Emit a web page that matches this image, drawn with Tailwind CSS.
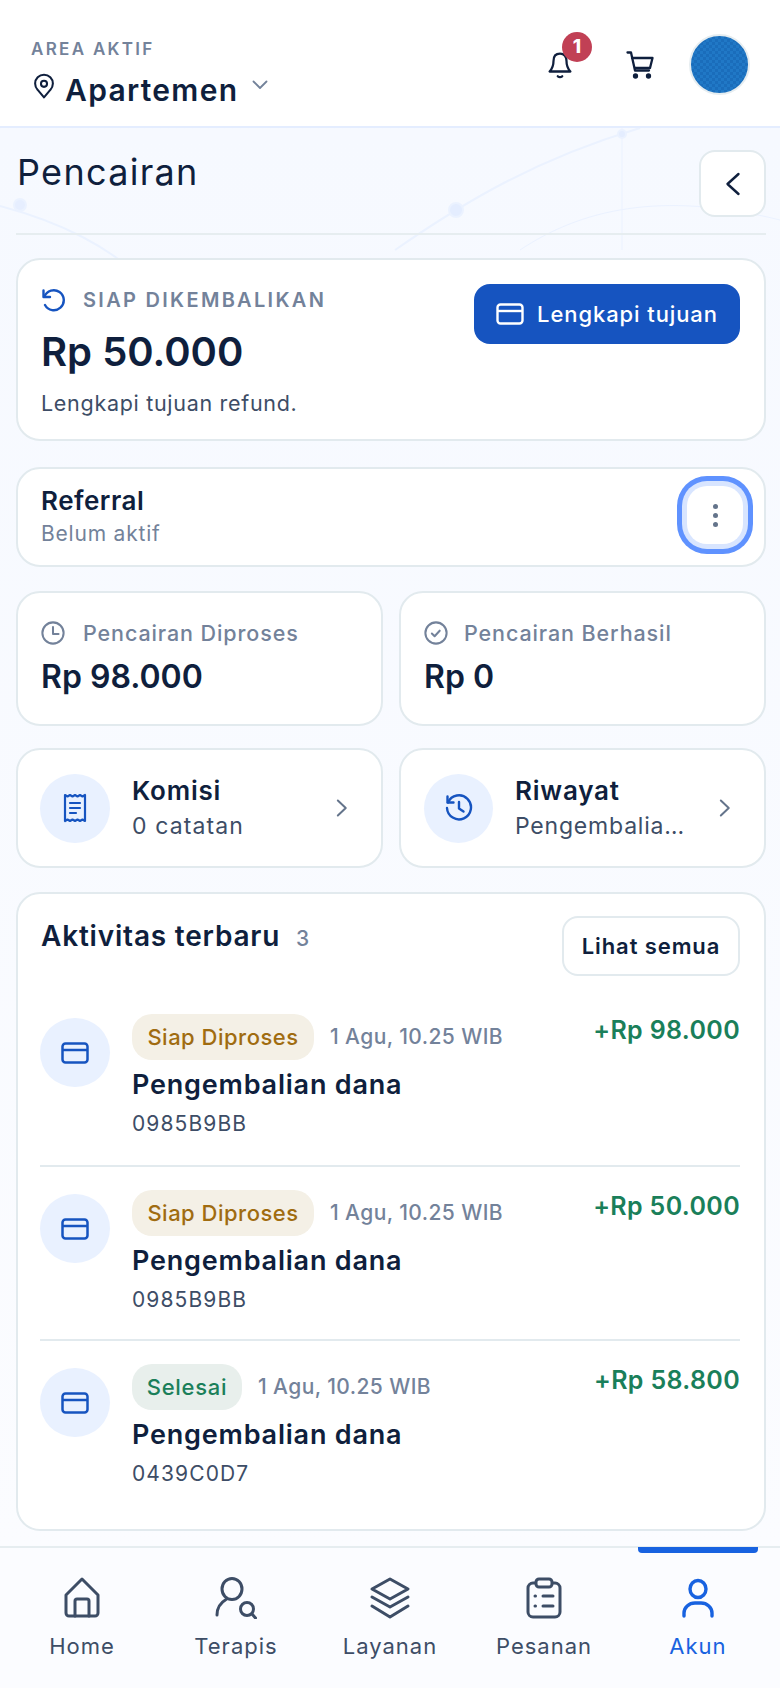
<!DOCTYPE html>
<html lang="id">
<head>
  <meta charset="UTF-8" />
  <meta name="viewport" content="width=device-width, initial-scale=1.0" />
  <title>Pencairan</title>
  <script src="https://cdn.jsdelivr.net/npm/@tailwindcss/browser@4"></script>
</head>
<body class="font-[Inter,sans-serif] text-[#0f1f3d] bg-[#f7faff]">
  <div class="w-[780px] h-[1688px] flex flex-col overflow-hidden">

    <!-- header -->
    <header class="h-[128px] shrink-0 bg-white border-b-2 border-[#e4edff] flex justify-between pl-[31px] pr-[30px] relative z-10">
      <div class="pt-[39px]">
        <p class="text-[17px] leading-[20px] font-semibold tracking-[2.300px] text-[#73829a]">AREA AKTIF</p>
        <div class="flex items-center mt-[12px]">
          <svg class="w-[26px] h-[28px] mt-[-8px]" viewBox="0 0 24 24" fill="none" stroke="#0f1f3d" stroke-width="1.9" stroke-linecap="round" stroke-linejoin="round"><circle cx="12" cy="10" r="2.8"/><path d="M12 22.5 6.2 15.6A8.2 8.2 0 1 1 17.8 15.6z"/></svg>
          <span class="ml-[8px] text-[30px] leading-[38px] font-semibold tracking-[1.300px]">Apartemen</span>
          <svg class="w-[18px] h-[18px] ml-[13px] mt-[-10px]" viewBox="0 0 18 18" fill="none" stroke="#73829a" stroke-width="1.8" stroke-linecap="round" stroke-linejoin="round"><path d="m2.500 5.500 6.500 6.500 6.500-6.500"/></svg>
        </div>
      </div>
      <div class="flex items-start">
        <div class="relative mt-[51px]">
          <svg class="w-[26px] h-[28px]" viewBox="0 0 30 32" fill="none" stroke="#0f1f3d" stroke-width="2.600" stroke-linecap="round" stroke-linejoin="round"><path d="M15 3c-5 0-7.500 3.500-7.500 8.500 0 6-1.500 9-4.500 12h24c-3-3-4.500-6-4.500-12C22.500 6.500 20 3 15 3z"/><path d="M12.500 29c1.500 1.200 3.500 1.200 5 0"/></svg>
          <span class="absolute left-[15px] top-[-19px] w-[30px] h-[30px] rounded-full bg-[#c14055] text-white text-[19px] font-extrabold flex items-center justify-center">1</span>
        </div>
        <svg class="w-[28px] h-[28px] ml-[53px] mt-[51px]" viewBox="0 0 28 28" fill="none" stroke="#0f1f3d" stroke-width="2.300" stroke-linecap="round" stroke-linejoin="round"><path d="M1.500 1.500h3.500l4 18h14"/><path d="M6 7h20.500l-2.500 10H9"/><circle cx="9.500" cy="25" r="1.500" fill="#0f1f3d"/><circle cx="22.500" cy="25" r="1.500" fill="#0f1f3d"/></svg>
        <div class="w-[61px] h-[61px] ml-[35px] mt-[34px] rounded-full border-2 border-[#e6edf0] bg-[#1a6fbe] bg-[repeating-conic-gradient(#1a6dbb_0_25%,#2078c6_0_50%)] bg-[length:6px_6px]"></div>
      </div>
    </header>

    <!-- content -->
    <main class="relative flex-1 pl-4 pr-[14px] overflow-hidden bg-linear-to-b from-[#f6f9ff] to-[#fbfcff]">
      <!-- faint network lines behind the page -->
      <svg class="absolute inset-0 w-full h-full" viewBox="0 0 780 1418" fill="none" stroke="#ebf2ff" stroke-width="2">
        <path d="M0 78c60 16 110 40 150 80"/>
        <path d="M395 122C470 70 540 30 640 0"/>
        <path d="M520 122c60-40 140-60 260-30" stroke-width="1"/>
        <path d="M622 0v122" stroke-width="1"/>
        <circle cx="20" cy="77" r="6" fill="#e6eeff"/>
        <circle cx="456" cy="82" r="7" fill="#e4edff"/>
        <circle cx="622" cy="6" r="4" fill="#e4edff"/>
      </svg>

      <div class="relative">
        <div class="flex justify-between items-start h-[107px] border-b-2 border-[#e6edf0]">
          <h1 class="text-[36px] leading-[44px] pt-[22px] pl-px tracking-[1.300px]">Pencairan</h1>
          <button class="w-[67px] h-[67px] mt-[22px] rounded-2xl bg-white border-2 border-[#e2eaee] flex items-center justify-center">
            <svg class="w-[16px] h-[24px]" viewBox="0 0 16 24" fill="none" stroke="#0f1f3d" stroke-width="2.400" stroke-linecap="round" stroke-linejoin="round"><path d="M13.500 2 2.500 12l11 10"/></svg>
          </button>
        </div>

        <!-- siap dikembalikan -->
        <section class="mt-[23px] h-[183px] rounded-[24px] bg-white border-2 border-[#e2eaee] flex justify-between pl-[23px] pr-[24px]">
          <div class="pt-[26px]">
            <div class="flex items-center h-[28px]">
              <svg class="w-[24px] h-[24px]" viewBox="0 0 24 24" fill="none" stroke="#1654c0" stroke-width="2.400" stroke-linecap="round" stroke-linejoin="round"><path d="M3.500 8.500A10 10 0 1 1 4 17"/><path d="M2.500 2.500v6.500h6.500"/></svg>
              <span class="ml-[18px] text-[20px] font-semibold tracking-[2.300px] text-[#73829a]">SIAP DIKEMBALIKAN</span>
            </div>
            <p class="text-[40px] leading-[52px] font-semibold mt-[12px]">Rp 50.000</p>
            <p class="text-[21.500px] leading-[30px] tracking-[0.700px] text-[#3d4d66] mt-[10px]">Lengkapi tujuan refund.</p>
          </div>
          <button class="w-[266px] h-[60px] mt-[24px] rounded-2xl bg-[#1654c0] text-white flex items-center justify-center gap-[13px] text-[22px] tracking-[0.900px] font-medium">
            <svg class="w-[28px] h-[22px]" viewBox="0 0 28 22" fill="none" stroke="white" stroke-width="2.400" stroke-linejoin="round"><rect x="1.500" y="1.500" width="25" height="19" rx="3"/><path d="M1.500 8h25"/></svg>
            Lengkapi tujuan
          </button>
        </section>

        <!-- referral -->
        <section class="mt-[26px] h-[100px] rounded-[24px] bg-white border-2 border-[#e2eaee] flex items-center justify-between pl-[23px] pr-[21px]">
          <div>
            <p class="text-[26px] leading-[34px] tracking-[0.500px] font-semibold">Referral</p>
            <p class="text-[21px] leading-[32px] tracking-[0.800px] text-[#73829a]">Belum aktif</p>
          </div>
          <button class="w-[56px] h-[58px] mt-[-4px] rounded-[20px] bg-white shadow-[0_0_0_5px_#d8e5ff,0_0_0_10px_#5f92ff] flex flex-col items-center justify-center gap-[4px]">
            <span class="w-[5px] h-[5px] rounded-full bg-[#64748b]"></span>
            <span class="w-[5px] h-[5px] rounded-full bg-[#64748b]"></span>
            <span class="w-[5px] h-[5px] rounded-full bg-[#64748b]"></span>
          </button>
        </section>

        <!-- ringkasan -->
        <div class="grid grid-cols-2 gap-x-[16px] mt-[24px]">
          <section class="h-[135px] rounded-[24px] bg-white border-2 border-[#e2eaee] pl-[23px] pt-[26px]">
            <div class="flex items-center h-[28px]">
              <svg class="w-[24px] h-[24px]" viewBox="0 0 26 26" fill="none" stroke="#73829a" stroke-width="2.200" stroke-linecap="round" stroke-linejoin="round"><circle cx="13" cy="13" r="11.500"/><path d="M13 6.500V14h6"/></svg>
              <span class="ml-[18px] text-[21.500px] tracking-[0.900px] font-medium text-[#73829a]">Pencairan Diproses</span>
            </div>
            <p class="text-[32px] leading-[44px] font-semibold mt-[8px]">Rp 98.000</p>
          </section>
          <section class="h-[135px] rounded-[24px] bg-white border-2 border-[#e2eaee] pl-[23px] pt-[26px]">
            <div class="flex items-center h-[28px]">
              <svg class="w-[24px] h-[24px]" viewBox="0 0 26 26" fill="none" stroke="#73829a" stroke-width="2.200" stroke-linecap="round" stroke-linejoin="round"><circle cx="13" cy="13" r="11.500"/><path d="m8.500 13.500 3 3 5.500-6"/></svg>
              <span class="ml-[16px] text-[21.500px] tracking-[0.900px] font-medium text-[#73829a]">Pencairan Berhasil</span>
            </div>
            <p class="text-[32px] leading-[44px] font-semibold mt-[8px]">Rp 0</p>
          </section>
        </div>

        <!-- pintasan -->
        <div class="grid grid-cols-2 gap-x-[16px] mt-[22px]">
          <a class="h-[120px] rounded-[24px] bg-white border-2 border-[#e2eaee] flex items-center pl-[22px] pr-[33px]">
            <span class="w-[70px] h-[69px] shrink-0 rounded-full bg-[#e9f1ff] flex items-center justify-center">
              <svg class="w-[24px] h-[30px]" viewBox="0 0 24 30" fill="none" stroke="#1654c0" stroke-width="2.200" stroke-linecap="round" stroke-linejoin="round"><path d="M2 2l2.500 1.500L7 2l2.500 1.500L12 2l2.500 1.500L17 2l2.500 1.500L22 2v26l-2.500-1.500L17 28l-2.500-1.500L12 28l-2.500-1.500L7 28l-2.500-1.500L2 28z"/><path d="M7 10h10M7 15h10M7 20h6"/></svg>
            </span>
            <span class="ml-[22px] flex-1">
              <span class="block text-[26px] leading-[36px] tracking-[0.800px] font-semibold">Komisi</span>
              <span class="block text-[23px] leading-[34px] tracking-[1.100px] text-[#3d4d66]">0 catatan</span>
            </span>
            <svg class="w-[12px] h-[20px]" viewBox="0 0 14 24" fill="none" stroke="#64748b" stroke-width="2.400" stroke-linecap="round" stroke-linejoin="round"><path d="m2 3 9.500 9L2 21"/></svg>
          </a>
          <a class="h-[120px] rounded-[24px] bg-white border-2 border-[#e2eaee] flex items-center pl-[23px] pr-[33px]">
            <span class="w-[69px] h-[69px] shrink-0 rounded-full bg-[#e9f1ff] flex items-center justify-center">
              <svg class="w-[28px] h-[28px]" viewBox="0 0 28 28" fill="none" stroke="#1654c0" stroke-width="2.400" stroke-linecap="round" stroke-linejoin="round"><path d="M3 8.500A12 12 0 1 1 2 14"/><path d="M2.500 2.500v6h6"/><path d="M14 8v6.500l4.500 3"/></svg>
            </span>
            <span class="ml-[22px] flex-1 min-w-0">
              <span class="block text-[26px] leading-[36px] tracking-[0.800px] font-semibold">Riwayat</span>
              <span class="block text-[23px] leading-[34px] tracking-[0.800px] text-[#3d4d66] whitespace-nowrap">Pengembalia…</span>
            </span>
            <svg class="w-[12px] h-[20px] shrink-0" viewBox="0 0 14 24" fill="none" stroke="#64748b" stroke-width="2.400" stroke-linecap="round" stroke-linejoin="round"><path d="m2 3 9.500 9L2 21"/></svg>
          </a>
        </div>

        <!-- aktivitas -->
        <section class="mt-[24px] h-[639px] rounded-[24px] bg-white border-2 border-[#e2eaee] pl-[22px] pr-[24px]">
          <div class="flex justify-between items-start pt-[22px] h-[120px]">
            <h2 class="text-[28px] leading-[40px] tracking-[0.800px] font-semibold pl-px">Aktivitas terbaru <span class="ml-[8px] text-[21px] font-medium text-[#73829a]">3</span></h2>
            <button class="w-[178px] h-[60px] rounded-2xl bg-white border-2 border-[#e2eaee] text-[22px] tracking-[0.900px] font-semibold">Lihat semua</button>
          </div>

          <div class="flex h-[153px] border-b-2 border-[#e2eaee]">
            <span class="w-[70px] h-[69px] mt-[4px] shrink-0 rounded-full bg-[#e9f1ff] flex items-center justify-center">
              <svg class="w-[28px] h-[22px]" viewBox="0 0 28 22" fill="none" stroke="#1654c0" stroke-width="2.500" stroke-linejoin="round"><rect x="1.500" y="1.500" width="25" height="19" rx="3"/><path d="M1.500 8h25"/></svg>
            </span>
            <div class="ml-[22px] flex-1">
              <div class="flex items-start justify-between">
                <div class="flex items-center">
                  <span class="h-[46px] w-[182px] rounded-[20px] bg-[#f4f0e6] text-[#a06c10] text-[22px] tracking-[0.500px] font-medium flex items-center justify-center">Siap Diproses</span>
                  <span class="ml-[16px] text-[21px] tracking-[0.400px] font-medium text-[#73829a]">1 Agu, 10.25 WIB</span>
                </div>
                <span class="text-[25px] leading-[32px] tracking-[0.350px] font-semibold text-[#1a7f5a]">+Rp 98.000</span>
              </div>
              <p class="text-[27px] leading-[36px] tracking-[0.800px] font-semibold mt-[7px]">Pengembalian dana</p>
              <p class="text-[21px] leading-[30px] tracking-[1.100px] text-[#3d4d66] mt-[6px]">0985B9BB</p>
            </div>
          </div>

          <div class="flex h-[174px] pt-[23px] border-b-2 border-[#e2eaee]">
            <span class="w-[70px] h-[69px] mt-[4px] shrink-0 rounded-full bg-[#e9f1ff] flex items-center justify-center">
              <svg class="w-[28px] h-[22px]" viewBox="0 0 28 22" fill="none" stroke="#1654c0" stroke-width="2.500" stroke-linejoin="round"><rect x="1.500" y="1.500" width="25" height="19" rx="3"/><path d="M1.500 8h25"/></svg>
            </span>
            <div class="ml-[22px] flex-1">
              <div class="flex items-start justify-between">
                <div class="flex items-center">
                  <span class="h-[46px] w-[182px] rounded-[20px] bg-[#f4f0e6] text-[#a06c10] text-[22px] tracking-[0.500px] font-medium flex items-center justify-center">Siap Diproses</span>
                  <span class="ml-[16px] text-[21px] tracking-[0.400px] font-medium text-[#73829a]">1 Agu, 10.25 WIB</span>
                </div>
                <span class="text-[25px] leading-[32px] tracking-[0.350px] font-semibold text-[#1a7f5a]">+Rp 50.000</span>
              </div>
              <p class="text-[27px] leading-[36px] tracking-[0.800px] font-semibold mt-[7px]">Pengembalian dana</p>
              <p class="text-[21px] leading-[30px] tracking-[1.100px] text-[#3d4d66] mt-[6px]">0985B9BB</p>
            </div>
          </div>

          <div class="flex pt-[23px]">
            <span class="w-[70px] h-[69px] mt-[4px] shrink-0 rounded-full bg-[#e9f1ff] flex items-center justify-center">
              <svg class="w-[28px] h-[22px]" viewBox="0 0 28 22" fill="none" stroke="#1654c0" stroke-width="2.500" stroke-linejoin="round"><rect x="1.500" y="1.500" width="25" height="19" rx="3"/><path d="M1.500 8h25"/></svg>
            </span>
            <div class="ml-[22px] flex-1">
              <div class="flex items-start justify-between">
                <div class="flex items-center">
                  <span class="h-[46px] w-[110px] rounded-[20px] bg-[#e8efec] text-[#1a7f5a] text-[22px] tracking-[0.700px] font-medium flex items-center justify-center">Selesai</span>
                  <span class="ml-[16px] text-[21px] tracking-[0.400px] font-medium text-[#73829a]">1 Agu, 10.25 WIB</span>
                </div>
                <span class="text-[25px] leading-[32px] tracking-[0.350px] font-semibold text-[#1a7f5a]">+Rp 58.800</span>
              </div>
              <p class="text-[27px] leading-[36px] tracking-[0.800px] font-semibold mt-[7px]">Pengembalian dana</p>
              <p class="text-[21px] leading-[30px] tracking-[1.100px] text-[#3d4d66] mt-[6px]">0439C0D7</p>
            </div>
          </div>
        </section>
      </div>
    </main>

    <!-- bottom nav -->
    <nav class="relative h-[142px] shrink-0 bg-[#fbfcff] border-t-2 border-[#e6edf0] grid grid-cols-5 px-[5px] text-[#3d4d66]">
      <span class="absolute right-[22px] top-[-1px] w-[120px] h-[6px] rounded-b-[4px] bg-[#1862e0]"></span>
      <a class="flex flex-col items-center pt-[29px]">
        <svg class="w-[38px] h-[42px]" viewBox="0 0 38 42" fill="none" stroke="#3d4d66" stroke-width="3" stroke-linecap="round" stroke-linejoin="round"><path d="M19 2 3 18v18a3 3 0 0 0 3 3h26a3 3 0 0 0 3-3V18z"/><path d="M12 39V24a2 2 0 0 1 2-2h10a2 2 0 0 1 2 2v15"/></svg>
        <span class="text-[22px] leading-[30px] tracking-[1px] mt-[12px]">Home</span>
      </a>
      <a class="flex flex-col items-center pt-[29px]">
        <svg class="w-[42px] h-[42px]" viewBox="0 0 42 42" fill="none" stroke="#3d4d66" stroke-width="3" stroke-linecap="round" stroke-linejoin="round"><ellipse cx="17" cy="12" rx="10" ry="10.500"/><path d="M2 38c0-7 3-12 9-15.500"/><circle cx="32" cy="32" r="6.500"/><path d="m37 37 3.500 4"/></svg>
        <span class="text-[22px] leading-[30px] tracking-[1px] mt-[12px]">Terapis</span>
      </a>
      <a class="flex flex-col items-center pt-[29px]">
        <svg class="w-[42px] h-[42px]" viewBox="0 0 42 42" fill="none" stroke="#3d4d66" stroke-width="3" stroke-linecap="round" stroke-linejoin="round"><path d="M21 2 39 12 21 22 3 12z"/><path d="m3 20 18 10 18-10"/><path d="m3 29 18 11 18-11"/></svg>
        <span class="text-[22px] leading-[30px] tracking-[1px] mt-[12px]">Layanan</span>
      </a>
      <a class="flex flex-col items-center pt-[29px]">
        <svg class="w-[36px] h-[42px]" viewBox="0 0 36 42" fill="none" stroke="#3d4d66" stroke-width="3" stroke-linecap="round" stroke-linejoin="round"><rect x="2" y="6" width="32" height="34" rx="5"/><rect x="10" y="2" width="16" height="8" rx="3" fill="#fbfcff"/><path d="M9 19h.500M9 29h.500M17 19h10M17 29h10"/></svg>
        <span class="text-[22px] leading-[30px] tracking-[1px] mt-[12px]">Pesanan</span>
      </a>
      <a class="flex flex-col items-center pt-[29px] text-[#1862e0]">
        <svg class="w-[32px] h-[42px]" viewBox="0 0 32 42" fill="none" stroke="#1862e0" stroke-width="3.400" stroke-linecap="round" stroke-linejoin="round"><ellipse cx="16" cy="12" rx="8" ry="8.500"/><path d="M2 39v-3a11 10 0 0 1 11-10h6a11 10 0 0 1 11 10v3"/></svg>
        <span class="text-[22px] leading-[30px] tracking-[1px] mt-[12px]">Akun</span>
      </a>
    </nav>
  </div>
</body>
</html>
